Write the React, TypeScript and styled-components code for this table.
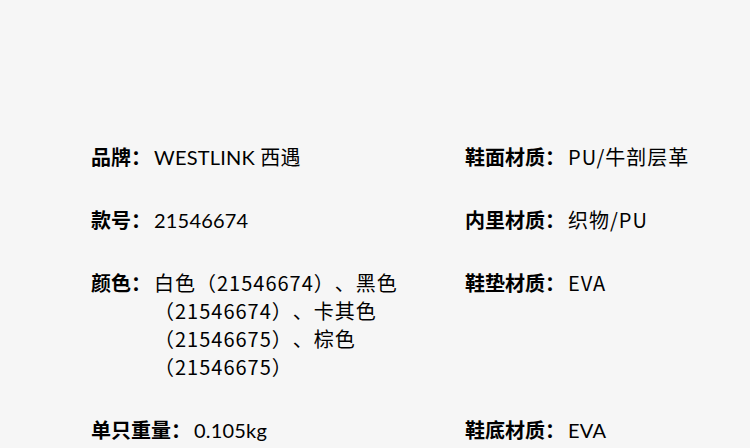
import * as React from "react"
import styled, { createGlobalStyle } from "styled-components";

const GlobalStyle = createGlobalStyle`
  html, body {
    margin: 0;
    padding: 0;
    background: #f6f6f6;
  }
  body {
    font-family: "Noto Sans CJK SC", "Noto Sans", sans-serif;
    color: #000;
    text-spacing-trim: space-all;
  }
`

interface Spec {
    label: string;
    value: string;
    geometric?: boolean;
    narrow?: boolean;
}

const left: Spec[] = [
    { label: "品牌", value: "WESTLINK 西遇", geometric: true },
    { label: "款号", value: "21546674", geometric: true },
    { label: "颜色", value: "白色（21546674）、黑色（21546674）、卡其色（21546675）、棕色（21546675）", narrow: true },
    { label: "单只重量", value: "0.105kg", geometric: true },
]

const right: Spec[] = [
    { label: "鞋面材质", value: "PU/牛剖层革" },
    { label: "内里材质", value: "织物/PU" },
    { label: "鞋垫材质", value: "EVA" },
    { label: "鞋底材质", value: "EVA", geometric: true },
]

export const Page = styled.div`
  width: 750px;
  height: 448px;
  overflow: hidden;
  box-sizing: border-box;
  padding: 143px 0 0 91px;
`

export const Grid = styled.div`
  display: grid;
  grid-template-columns: 374px 1fr;
  row-gap: 35px;
`

export const Row = styled.div`
  display: flex;
  align-items: flex-start;
  font-size: 20px;
  line-height: 28px;
`

export const Label = styled.span`
  font-weight: bold;
  white-space: nowrap;
`

export const Value = styled.span<{ $geometric?: boolean; $narrow?: boolean }>`
  margin-left: 3px;
  font-family: ${p => p.$geometric
        ? `"Lato", "Noto Sans CJK SC", sans-serif`
        : `"Noto Sans CJK SC", "Noto Sans", sans-serif`};
  letter-spacing: ${p => (p.$geometric ? "0.2px" : "1px")};
  ${p => p.$narrow && `width: 248px;`}
`

const SpecRow = ({ label, value, geometric, narrow }: Spec) => (
    <Row>
        <Label>{label}：</Label>
        <Value $geometric={geometric} $narrow={narrow}>{value}</Value>
    </Row>
)

const App = () => {
    return (
        <Page>
            <GlobalStyle />
            <Grid>
                {left.map((l, i) => (
                    <React.Fragment key={l.label}>
                        <SpecRow {...l} />
                        <SpecRow {...right[i]} />
                    </React.Fragment>
                ))}
            </Grid>
        </Page>
    )
}

export default App
